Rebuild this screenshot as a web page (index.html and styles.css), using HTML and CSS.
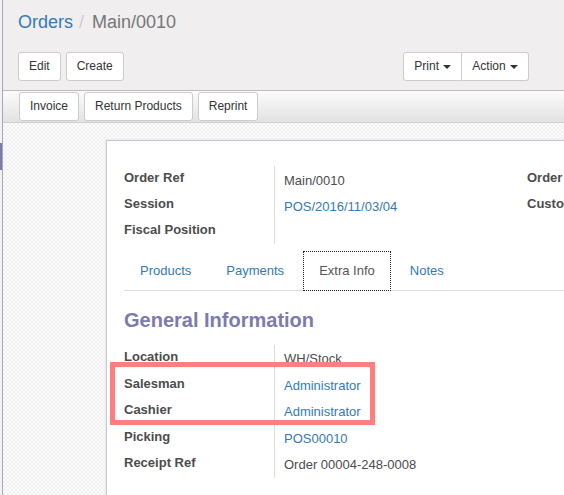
FILE: index.html
```html
<!DOCTYPE html>
<html>
<head>
<meta charset="utf-8">
<link rel="stylesheet" href="styles.css">
</head>
<body>
<div class="app">
  <div class="sidebar"><div class="sidebar-active"></div></div>
  <div class="main">
    <div class="control-panel">
      <ol class="breadcrumb">
        <li><a class="crumb-link">Orders</a></li>
        <li class="crumb-sep">/</li>
        <li class="crumb-active">Main/0010</li>
      </ol>
      <div class="cp-buttons">
        <div class="btn-row">
          <button class="btn">Edit</button>
          <button class="btn">Create</button>
        </div>
        <div class="btn-group">
          <button class="btn btn-first">Print <span class="caret"></span></button>
          <button class="btn btn-last">Action <span class="caret"></span></button>
        </div>
      </div>
    </div>
    <div class="statusbar">
      <button class="btn">Invoice</button>
      <button class="btn">Return Products</button>
      <button class="btn">Reprint</button>
    </div>
    <div class="sheet-bg">
      <div class="sheet">
        <div class="groups">
          <div class="group group-top">
            <div class="row"><div class="label">Order Ref</div><div class="value">Main/0010</div></div>
            <div class="row"><div class="label">Session</div><div class="value"><a class="link">POS/2016/11/03/04</a></div></div>
            <div class="row"><div class="label">Fiscal Position</div><div class="value"></div></div>
          </div>
          <div class="group group-top">
            <div class="row"><div class="label">Order Date</div><div class="value"></div></div>
            <div class="row"><div class="label">Customer</div><div class="value"></div></div>
          </div>
        </div>
        <ul class="tabs">
          <li class="tab"><a class="tab-link">Products</a></li>
          <li class="tab"><a class="tab-link">Payments</a></li>
          <li class="tab"><a class="tab-link tab-active">Extra Info</a></li>
          <li class="tab"><a class="tab-link">Notes</a></li>
        </ul>
        <h2 class="section-title">General Information</h2>
        <div class="group group-info">
          <div class="row"><div class="label">Location</div><div class="value">WH/Stock</div></div>
          <div class="row"><div class="label">Salesman</div><div class="value"><a class="link">Administrator</a></div></div>
          <div class="row"><div class="label">Cashier</div><div class="value"><a class="link">Administrator</a></div></div>
          <div class="row"><div class="label">Picking</div><div class="value"><a class="link">POS00010</a></div></div>
          <div class="row"><div class="label">Receipt Ref</div><div class="value">Order 00004-248-0008</div></div>
        </div>
      </div>
    </div>
  </div>
  <div class="highlight"></div>
</div>
</body>
</html>
```

FILE: styles.css
```css
html, body {
  margin: 0;
  padding: 0;
  width: 564px;
  height: 495px;
  overflow: hidden;
  font-family: "Liberation Sans", Arial, sans-serif;
  font-size: 13px;
  color: #4c4c4c;
}

.app {
  display: flex;
  height: 495px;
  position: relative;
}

.sidebar {
  width: 2px;
  flex: none;
  background: #f2f2f2;
  position: relative;
}

.sidebar-active {
  position: absolute;
  left: 0;
  top: 143px;
  width: 2px;
  height: 27px;
  background: #7c7bad;
}

.main {
  flex: 1;
  min-width: 0;
  border-left: 1px solid #a8a7b7;
  display: flex;
  flex-direction: column;
}

.control-panel {
  background: #f0eeee;
  border-bottom: 1px solid #bdbbbb;
  padding: 12px 35px 9px 15px;
  height: 69px;
}

.breadcrumb {
  list-style: none;
  margin: 0;
  padding: 0;
  display: flex;
  font-size: 18px;
  line-height: 20px;
}

.crumb-link {
  color: #337ab7;
}

.crumb-sep {
  color: #cccccc;
  padding: 0 8px 0 6px;
}

.crumb-active {
  color: #777777;
}

.cp-buttons {
  margin-top: 20px;
  display: flex;
  align-items: flex-start;
}

.btn-row {
  display: flex;
  gap: 5px;
}

.btn {
  font-family: "Liberation Sans", Arial, sans-serif;
  font-size: 12px;
  line-height: 17px;
  padding: 5px 10px;
  height: 29px;
  background: #ffffff;
  border: 1px solid #cccccc;
  border-radius: 3px;
  color: #333333;
  margin: 0;
  white-space: nowrap;
}

.btn-group {
  margin-left: auto;
  display: flex;
}

.btn-first {
  border-top-right-radius: 0;
  border-bottom-right-radius: 0;
}

.btn-last {
  border-left: none;
  border-top-left-radius: 0;
  border-bottom-left-radius: 0;
}

.caret {
  display: inline-block;
  width: 0;
  height: 0;
  margin-left: 1px;
  vertical-align: middle;
  border-top: 4px solid #333333;
  border-left: 4px solid transparent;
  border-right: 4px solid transparent;
}

.statusbar {
  display: flex;
  gap: 5px;
  padding: 1px 0 1px 16px;
  background: linear-gradient(#fcfcfc, #e2e2e2);
  border-bottom: 1px solid #cfcfcf;
}

.sheet-bg {
  flex: 1;
  background-color: #fbfbfb;
  background-image: conic-gradient(#f1f1f1 25%, transparent 0 50%, #f1f1f1 0 75%, transparent 0);
  background-size: 4px 4px;
  padding-top: 17px;
  padding-left: 103px;
  overflow: hidden;
}

.sheet {
  width: 820px;
  height: 400px;
  background: #ffffff;
  border: 1px solid #c8c7d2;
  box-shadow: 0 0 2px rgba(0, 0, 0, 0.12);
  padding: 25px 17px 0 17px;
  box-sizing: border-box;
}

.groups {
  display: grid;
  grid-template-columns: 403px 1fr;
}

.row {
  display: grid;
  grid-template-columns: 151px 1fr;
}

.group-top .row {
  height: 26px;
}

.group-info .row {
  height: 26.5px;
}

.label {
  font-weight: bold;
  line-height: 24px;
  padding-bottom: 2px;
  border-right: 1px solid #dddddd;
  white-space: nowrap;
}

.group-top .row:last-child .label,
.group-info .row:last-child .label {
  padding-bottom: 0;
}

.value {
  line-height: 24px;
  padding-top: 2px;
  padding-left: 9px;
  white-space: nowrap;
}

.group-top .value {
  padding-top: 3px;
}

.link {
  color: #337ab7;
}

.tabs {
  list-style: none;
  margin: 7px 0 0 0;
  padding: 0;
  display: flex;
  border-bottom: 1px solid #dddddd;
}

.tab {
  margin-bottom: -1px;
  margin-right: 3px;
}

.tab-link {
  display: block;
  padding: 10px 15px;
  line-height: 18px;
  border: 1px solid transparent;
  color: #337ab7;
}

.tab-active {
  color: #555555;
  background: #ffffff;
  border: 1px dotted #222222;
}

.section-title {
  margin: 18px 0 14px 0;
  font-size: 20px;
  line-height: 22px;
  font-weight: bold;
  color: #7c7bad;
}

.highlight {
  position: absolute;
  left: 110px;
  top: 362px;
  width: 265px;
  height: 63px;
  box-sizing: border-box;
  border: 5px solid #ff7f7f;
  pointer-events: none;
}
```
